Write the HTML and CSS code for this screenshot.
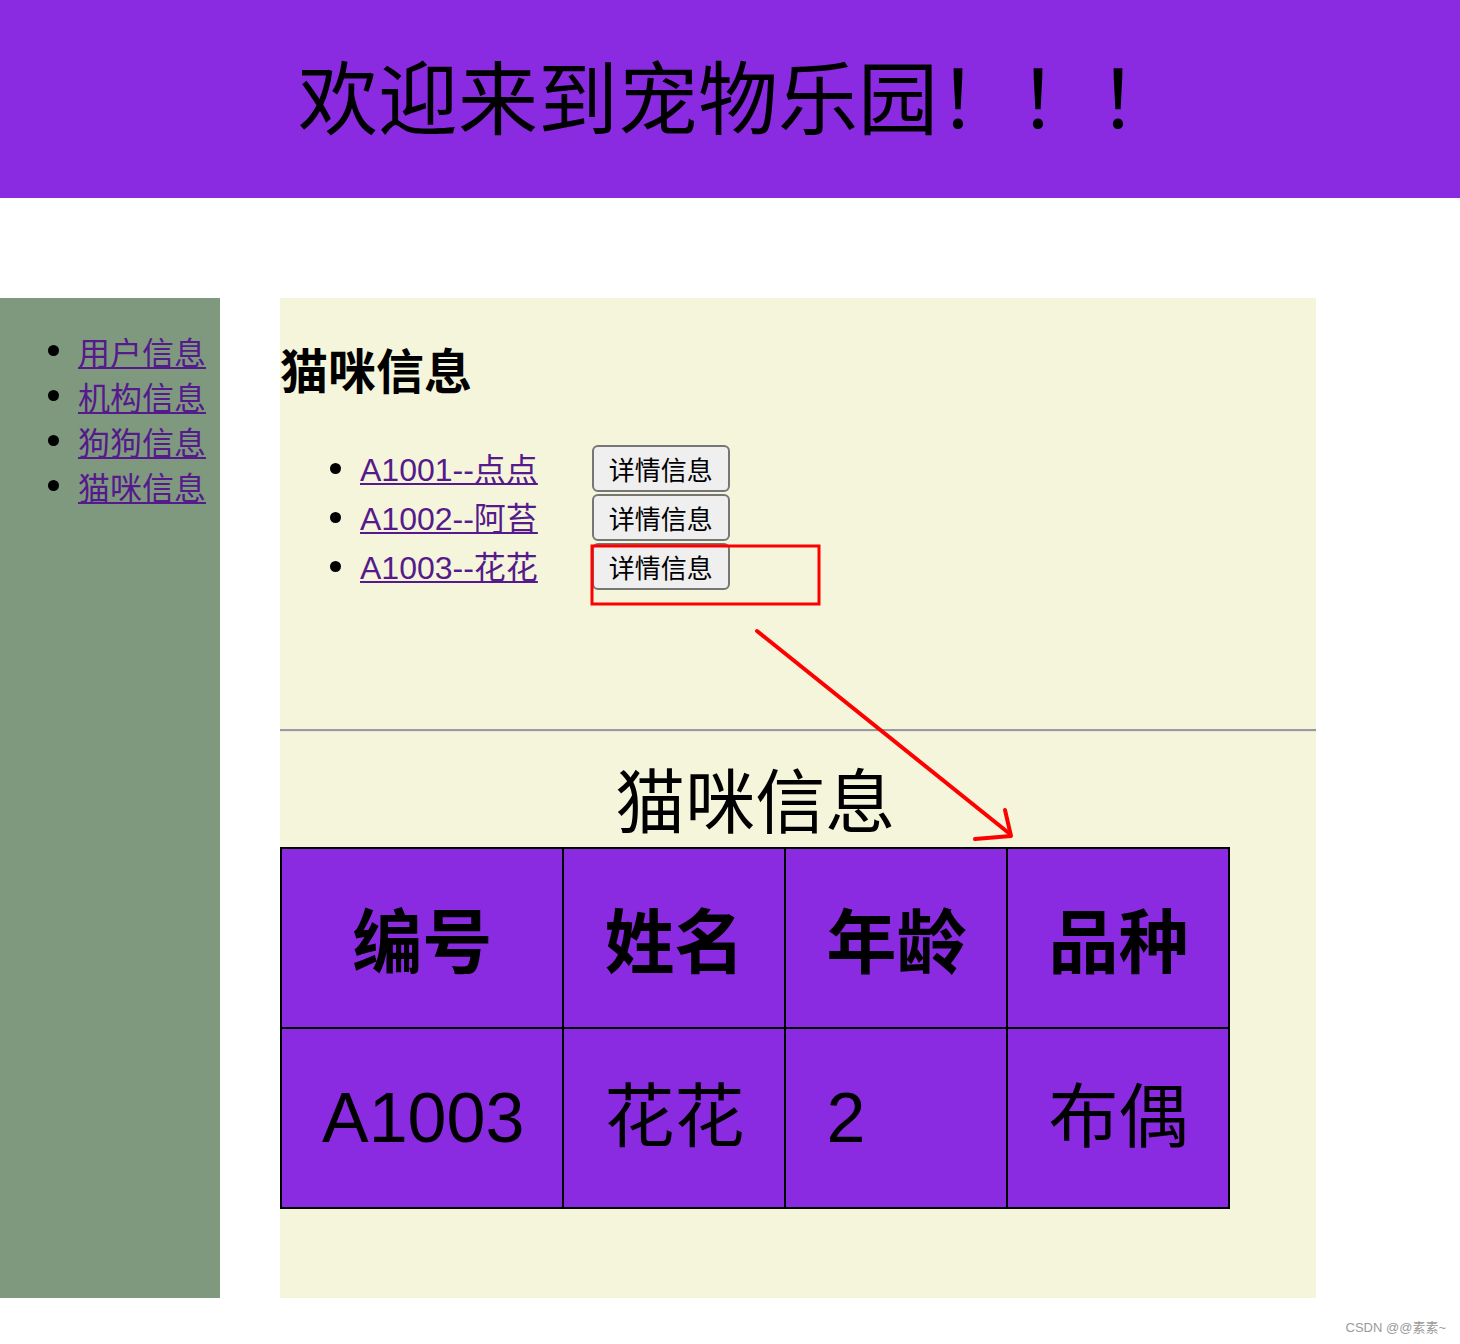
FILE: index.html
```html
<!DOCTYPE html>
<html lang="zh-CN">
<head>
<meta charset="utf-8">
<title>宠物乐园</title>
<link rel="stylesheet" href="styles.css">
</head>
<body>
<div class="page">
  <header class="banner">欢迎来到宠物乐园！！！</header>
  <div class="layout">
    <nav class="sidebar">
      <ul class="nav-list">
        <li><a href="#">用户信息</a></li>
        <li><a href="#">机构信息</a></li>
        <li><a href="#">狗狗信息</a></li>
        <li><a href="#">猫咪信息</a></li>
      </ul>
    </nav>
    <main class="content">
      <h2 class="section-title">猫咪信息</h2>
      <ul class="cat-list">
        <li><a href="#">A1001--点点</a><button class="detail-btn" type="button">详情信息</button></li>
        <li><a href="#">A1002--阿苔</a><button class="detail-btn" type="button">详情信息</button></li>
        <li><a href="#">A1003--花花</a><button class="detail-btn" type="button">详情信息</button></li>
      </ul>
      <hr class="divider">
      <table class="detail-table">
        <caption>猫咪信息</caption>
        <tr><th>编号</th><th>姓名</th><th>年龄</th><th>品种</th></tr>
        <tr><td>A1003</td><td>花花</td><td>2</td><td>布偶</td></tr>
      </table>
    </main>
  </div>
  <svg class="annotation" width="1460" height="1344" viewBox="0 0 1460 1344" aria-hidden="true">
    <rect x="592" y="546" width="227" height="58" fill="none" stroke="#ff0000" stroke-width="3"/>
    <path d="M757 631 L1010 834" fill="none" stroke="#ff0000" stroke-width="4" stroke-linecap="round"/>
    <path d="M1005 810 L1011 836 L975 839" fill="none" stroke="#ff0000" stroke-width="4" stroke-linecap="round" stroke-linejoin="round"/>
  </svg>
  <div class="watermark">CSDN @@素素~</div>
</div>
</body>
</html>
```

FILE: styles.css
```css
html, body {
  margin: 0;
  padding: 0;
  background: #ffffff;
}

body {
  font-family: "Liberation Sans", "Noto Sans CJK SC", sans-serif;
  color: #000;
}

.page {
  position: relative;
  width: 1460px;
  height: 1344px;
  overflow: hidden;
}

.banner {
  height: 198px;
  box-sizing: border-box;
  padding: 0 0 12px 16px;
  background: #8a2be2;
  display: flex;
  align-items: center;
  justify-content: center;
  font-family: "Noto Sans CJK SC", sans-serif;
  font-size: 80px;
  font-weight: normal;
  color: #000;
}

.layout {
  display: flex;
  gap: 60px;
  margin-top: 100px;
}

.sidebar {
  width: 220px;
  height: 1000px;
  background: #7f997f;
}

.nav-list {
  list-style: none;
  margin: 30px 0 0 0;
  padding: 0 0 0 78px;
  font-size: 32px;
  font-family: "Noto Sans CJK SC", sans-serif;
}

.nav-list li {
  display: flex;
  align-items: center;
  height: 45px;
}

.nav-list li::before,
.cat-list li::before {
  content: "";
  flex: none;
  width: 11px;
  height: 11px;
  border-radius: 50%;
  background: #000;
}

.nav-list li::before {
  margin-left: -30px;
  margin-right: 19px;
}

a {
  color: #551a8b;
  text-decoration: underline;
  text-decoration-thickness: 2px;
  text-underline-offset: 2px;
}

.content {
  width: 1036px;
  height: 1000px;
  background: #f5f5dc;
}

.section-title {
  margin: 37px 0 0 0;
  font-family: "Noto Sans CJK SC", sans-serif;
  font-size: 48px;
  font-weight: bold;
  line-height: 66px;
}

.cat-list {
  list-style: none;
  margin: 43px 0 138px 0;
  padding: 0 0 0 80px;
  font-size: 32px;
}

.cat-list li {
  display: flex;
  align-items: center;
  height: 49px;
}

.cat-list li > a {
  position: relative;
  top: -2px;
}

.cat-list li::before {
  margin-left: -30px;
  margin-right: 19px;
}

.detail-btn {
  margin-left: 54px;
  height: 47px;
  padding: 0 15px;
  font-family: "Noto Sans CJK SC", sans-serif;
  font-size: 26px;
  line-height: 43px;
  color: #000;
  background: #efefef;
  border: 2px solid #767676;
  border-radius: 6px;
}

.divider {
  height: 0;
  margin: 0 0 17px 0;
  border: 0;
  border-top: 2px solid #9a9a9a;
  border-bottom: 1px solid #e6e6e6;
}

.detail-table {
  border-collapse: collapse;
  background: #8a2be2;
  border: 2px solid #000;
  font-size: 70px;
  line-height: 98px;
}

.detail-table caption {
  font-family: "Noto Sans CJK SC", sans-serif;
  font-size: 70px;
  line-height: 98px;
  font-weight: normal;
  background: transparent;
}

.detail-table th,
.detail-table td {
  border: 2px solid #000;
  padding: 40px;
}

.detail-table th {
  font-family: "Noto Sans CJK SC", sans-serif;
  font-weight: bold;
  text-align: center;
}

.detail-table td {
  text-align: left;
  font-weight: normal;
}

.detail-table td:first-child {
  padding-right: 38px;
}

.annotation {
  position: absolute;
  left: 0;
  top: 0;
  pointer-events: none;
}

.watermark {
  position: absolute;
  right: 14px;
  bottom: 8px;
  font-family: "Liberation Sans", "Noto Sans CJK SC", sans-serif;
  font-size: 13px;
  color: #9a9a9a;
}
```
